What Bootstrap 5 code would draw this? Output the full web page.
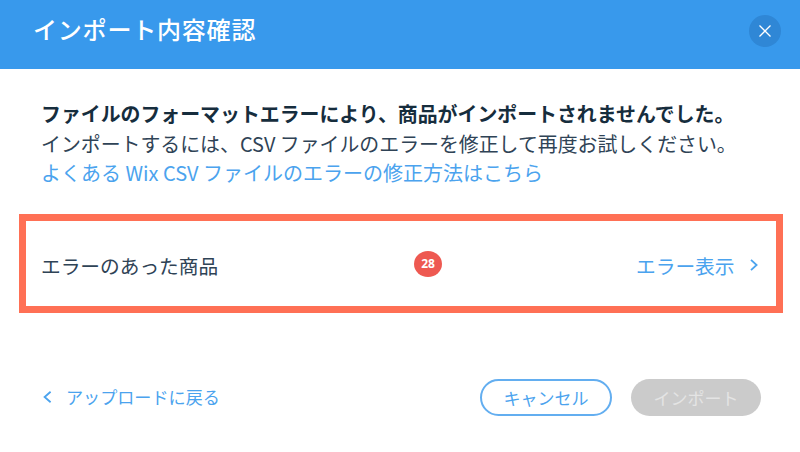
<!DOCTYPE html>
<html lang="ja">
<head>
<meta charset="utf-8">
<title>インポート内容確認</title>
<link href="https://cdn.jsdelivr.net/npm/bootstrap@5.3.0/dist/css/bootstrap.min.css" rel="stylesheet">
<style>
html,body{height:452px;overflow:hidden;background:#fff;}
body{font-family:"Noto Sans CJK JP","Liberation Sans",sans-serif;color:#2f4356;}
.dlg-head{height:69px;background:#3899ec;padding:0 19px 0 33px;color:#fff;}
.dlg-title{font-size:24px;font-weight:500;line-height:1;margin:0 0 11px;letter-spacing:.8px;}
.dlg-close{width:32px;height:32px;border:0;padding:0;background:#2f87d6;border-radius:50%;margin-bottom:7px;}
.dlg-msg{padding:30px 41px 0;font-size:19.9px;line-height:29.5px;white-space:nowrap;}
.dlg-msg p{margin:0;}
.msg-strong{font-weight:700;color:#162d3d;}
.blue{color:#4ba3ee;text-decoration:none;}
.dlg-link{font-size:20px;}
.err-box{margin:26.5px 17.5px 0 19px;height:99px;border:7px solid #ff7055;padding:0 18px 0 15px;font-size:19.7px;}
.err-name{width:373px;padding-top:4px;}
.err-act{flex:1 1 0;padding-top:4px;gap:15px;}
.err-badge{width:28px;height:26px;border-radius:50%;background:#ee5951;color:#fff;font-family:"Noto Sans","Liberation Sans",sans-serif;font-size:12px;font-weight:700;}
.dlg-foot{padding:0 39px 0 43px;margin-top:65.5px;}
.foot-back{font-size:17.1px;gap:14px;}
.pill{height:37px;border-radius:19px;font-size:17px;padding:0;line-height:1;}
.pill-cancel{width:132px;background:#fff;border:2px solid #63aef0;color:#4ba3ee;}
.pill-import{width:130px;background:#cbcbcb;border:0;color:#e4e4e4;}
.btn-gap{gap:19px;}
</style>
</head>
<body>
<div class="dlg-head d-flex align-items-center justify-content-between">
  <h1 class="dlg-title">インポート内容確認</h1>
  <button class="dlg-close d-flex align-items-center justify-content-center" aria-label="閉じる">
    <svg width="14" height="14" viewBox="0 0 14 14"><path d="M1.5 1.5 12.5 12.5M12.5 1.5 1.5 12.5" stroke="#fff" stroke-width="1.3" fill="none"/></svg>
  </button>
</div>
<div class="dlg-msg">
  <p class="msg-strong">ファイルのフォーマットエラーにより、商品がインポートされませんでした。</p>
  <p>インポートするには、CSV ファイルのエラーを修正して再度お試しください。</p>
  <p><a class="blue dlg-link" href="#">よくある Wix CSV ファイルのエラーの修正方法はこちら</a></p>
</div>
<div class="err-box d-flex align-items-center">
  <div class="err-name">エラーのあった商品</div>
  <div class="err-badge d-flex align-items-center justify-content-center">28</div>
  <div class="err-act d-flex align-items-center justify-content-end blue">エラー表示
    <svg width="8" height="12" viewBox="0 0 8 12"><path d="M1 .8 6.6 6 1 11.2" stroke="#4ba3ee" stroke-width="1.8" fill="none"/></svg>
  </div>
</div>
<div class="dlg-foot d-flex align-items-center justify-content-between">
  <a class="blue foot-back d-flex align-items-center" href="#">
    <svg width="9" height="12" viewBox="0 0 9 12"><path d="M7.6 .8 1.6 6 7.6 11.2" stroke="#4ba3ee" stroke-width="1.8" fill="none"/></svg>
    アップロードに戻る</a>
  <div class="d-flex btn-gap">
    <button class="pill pill-cancel">キャンセル</button>
    <button class="pill pill-import">インポート</button>
  </div>
</div>
<script src="https://cdn.jsdelivr.net/npm/bootstrap@5.3.0/dist/js/bootstrap.bundle.min.js"></script>
</body>
</html>
